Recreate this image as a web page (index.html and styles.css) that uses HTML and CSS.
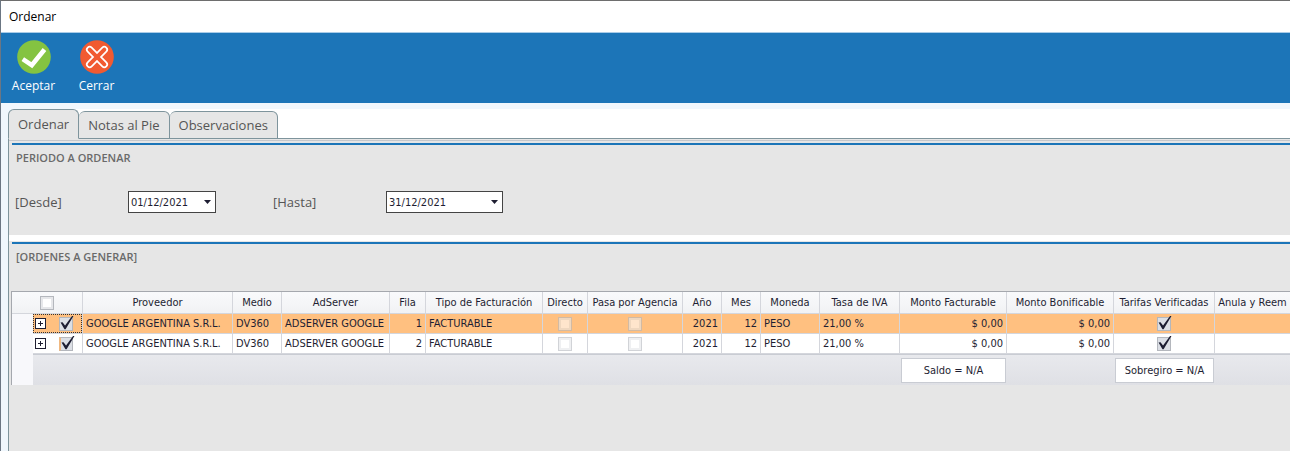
FILE: index.html
```html
<!DOCTYPE html>
<html lang="es">
<head>
    <meta charset="UTF-8">
    <meta name="viewport" content="width=device-width, initial-scale=1.0">
    <title>Ordenar</title>
    <link rel="stylesheet" href="styles.css">
</head>
<body>
    <div class="window">
        <header class="title-bar">Ordenar</header>

        <div class="toolbar">
            <button type="button" class="tool">
                <svg width="34" height="34" viewBox="0 0 34 34">
                    <circle cx="17" cy="17" r="16.8" fill="#84c341"/>
                    <path d="M5.8 19.2 L14.8 25.2 L27.5 9.5" fill="none" stroke="#fff" stroke-width="4.6"/>
                </svg>
                Aceptar
            </button>
            <button type="button" class="tool">
                <svg width="34" height="34" viewBox="0 0 34 34">
                    <circle cx="17" cy="17" r="16.8" fill="#f15a31"/>
                    <path d="M9.7 9.7 L24.3 24.3 M24.3 9.7 L9.7 24.3" fill="none" stroke="#fff" stroke-width="7.4" stroke-linecap="round"/>
                    <path d="M9.7 9.7 L24.3 24.3 M24.3 9.7 L9.7 24.3" fill="none" stroke="#f15a31" stroke-width="4" stroke-linecap="round"/>
                </svg>
                Cerrar
            </button>
        </div>

        <main class="content">
            <nav class="tabs">
                <button type="button" class="tab active">Ordenar</button>
                <button type="button" class="tab">Notas al Pie</button>
                <button type="button" class="tab">Observaciones</button>
            </nav>

            <div class="panel">
                <section class="group period">
                    <h2>PERIODO A ORDENAR</h2>
                    <form class="dates">
                        <label for="desde">[Desde]</label>
                        <div class="date-box">
                            <input type="text" id="desde" value="01/12/2021">
                            <button type="button" aria-label="Abrir calendario">
                                <svg width="7" height="4" viewBox="0 0 7 4"><path d="M0 0 H7 L3.5 4 Z" fill="#1e1e32"/></svg>
                            </button>
                        </div>
                        <label for="hasta">[Hasta]</label>
                        <div class="date-box wide">
                            <input type="text" id="hasta" value="31/12/2021">
                            <button type="button" aria-label="Abrir calendario">
                                <svg width="7" height="4" viewBox="0 0 7 4"><path d="M0 0 H7 L3.5 4 Z" fill="#1e1e32"/></svg>
                            </button>
                        </div>
                    </form>
                </section>

                <section class="group orders">
                    <h2>[ORDENES A GENERAR]</h2>
                    <div class="grid">
                        <table>
                            <colgroup>
                                <col class="c-gutter">
                                <col class="c-select">
                                <col class="c-provider">
                                <col class="c-media">
                                <col class="c-server">
                                <col class="c-row">
                                <col class="c-type">
                                <col class="c-direct">
                                <col class="c-agency">
                                <col class="c-year">
                                <col class="c-year">
                                <col class="c-currency">
                                <col class="c-tax">
                                <col class="c-amount">
                                <col class="c-amount">
                                <col class="c-rates">
                                <col>
                            </colgroup>
                            <thead>
                                <tr>
                                    <th colspan="2"><input type="checkbox" aria-label="Seleccionar todo"></th>
                                    <th>Proveedor</th>
                                    <th>Medio</th>
                                    <th>AdServer</th>
                                    <th>Fila</th>
                                    <th>Tipo de Facturación</th>
                                    <th>Directo</th>
                                    <th>Pasa por Agencia</th>
                                    <th>Año</th>
                                    <th>Mes</th>
                                    <th>Moneda</th>
                                    <th>Tasa de IVA</th>
                                    <th>Monto Facturable</th>
                                    <th>Monto Bonificable</th>
                                    <th>Tarifas Verificadas</th>
                                    <th class="last">Anula y Reem</th>
                                </tr>
                            </thead>
                            <tbody>
                                <tr class="selected">
                                    <td class="gutter"></td>
                                    <td class="select-cell">
                                        <div class="select">
                                            <button type="button" class="expand" aria-label="Expandir"></button>
                                            <input type="checkbox" aria-label="Seleccionar fila 1" checked>
                                        </div>
                                    </td>
                                    <td>GOOGLE ARGENTINA S.R.L.</td>
                                    <td>DV360</td>
                                    <td>ADSERVER GOOGLE</td>
                                    <td class="num">1</td>
                                    <td>FACTURABLE</td>
                                    <td class="check"><input type="checkbox" aria-label="Directo" disabled></td>
                                    <td class="check"><input type="checkbox" aria-label="Pasa por Agencia" disabled></td>
                                    <td class="num">2021</td>
                                    <td class="num">12</td>
                                    <td>PESO</td>
                                    <td>21,00 %</td>
                                    <td class="num">$ 0,00</td>
                                    <td class="num">$ 0,00</td>
                                    <td class="check"><input type="checkbox" aria-label="Tarifas Verificadas" checked></td>
                                    <td class="last"></td>
                                </tr>
                                <tr>
                                    <td class="gutter"></td>
                                    <td class="select-cell">
                                        <div class="select">
                                            <button type="button" class="expand" aria-label="Expandir"></button>
                                            <input type="checkbox" class="hot" aria-label="Seleccionar fila 2" checked>
                                        </div>
                                    </td>
                                    <td>GOOGLE ARGENTINA S.R.L.</td>
                                    <td>DV360</td>
                                    <td>ADSERVER GOOGLE</td>
                                    <td class="num">2</td>
                                    <td>FACTURABLE</td>
                                    <td class="check"><input type="checkbox" aria-label="Directo" disabled></td>
                                    <td class="check"><input type="checkbox" aria-label="Pasa por Agencia" disabled></td>
                                    <td class="num">2021</td>
                                    <td class="num">12</td>
                                    <td>PESO</td>
                                    <td>21,00 %</td>
                                    <td class="num">$ 0,00</td>
                                    <td class="num">$ 0,00</td>
                                    <td class="check"><input type="checkbox" aria-label="Tarifas Verificadas" checked></td>
                                    <td class="last"></td>
                                </tr>
                            </tbody>
                            <tfoot>
                                <tr>
                                    <td class="gutter"></td>
                                    <td colspan="12"></td>
                                    <td><div class="total">Saldo = N/A</div></td>
                                    <td></td>
                                    <td><div class="total">Sobregiro = N/A</div></td>
                                    <td></td>
                                </tr>
                            </tfoot>
                        </table>
                    </div>
                </section>
            </div>
        </main>
    </div>
</body>
</html>
```
FILE: styles.css
```css
* {
    box-sizing: border-box;
}

body {
    margin: 0;
    font-family: 'Open Sans', 'Noto Sans', sans-serif;
    font-size: 12px;
    color: #555;
}

button, input {
    font: inherit;
    color: inherit;
    margin: 0;
    padding: 0;
}

.window {
    display: flex;
    flex-direction: column;
    min-height: 100vh;
    border-top: 1px solid #6e6e6e;
    border-left: 1px solid #6b7683;
    background: #f0f7fd;
}

.title-bar {
    height: 32px;
    padding-left: 8px;
    line-height: 32px;
    color: #000;
    background: #fff;
    border-bottom: 1px solid #a9cce8;
}

/* Toolbar */
.toolbar {
    display: flex;
    height: 70px;
    padding-left: 1px;
    background: #1c75b8;
}

.tool {
    display: flex;
    flex-direction: column;
    align-items: center;
    gap: 4px;
    width: 63px;
    padding-top: 7px;
    line-height: 16px;
    color: #fff;
    background: none;
    border: none;
}

/* Tabs */
.content {
    flex: 1;
    display: flex;
    flex-direction: column;
    padding: 6px 0 0 7px;
}

.tabs {
    display: flex;
    align-items: flex-end;
    height: 30px;
    background: linear-gradient(to right, #f0f7fd 20px, #fff 20px);
    box-shadow: inset 0 -1px #7e949c;
}

.tab {
    height: 28px;
    padding: 0 9px;
    font-size: 13px;
    color: #555;
    background: #e6e6e6;
    border: 1px solid #7e949c;
    border-left-width: 0;
    border-radius: 6px 6px 0 0;
}

.tab.active {
    height: 30px;
    border-left-width: 1px;
    border-bottom-color: #e6e6e6;
}

.panel {
    flex: 1;
    padding-top: 4px;
    background: #e6e6e6;
    border-left: 1px solid #7e949c;
    box-shadow: inset 0 1px #e6e6e6, inset 0 2px #c4c7cc;
}

/* Groups */
.group {
    padding-left: 2px;
}

.group::before {
    content: "";
    display: block;
    height: 2px;
    margin-left: 1px;
    background: #1c75b8;
}

.group h2 {
    margin: 5px 0 0;
    padding-left: 5px;
    font-size: 11px;
    font-weight: 600;
    line-height: 16px;
    color: #6a6a6a;
}

.period {
    height: 98px;
    border-bottom: 6px solid #fff;
}

.orders {
    padding-top: 1px;
}

.dates {
    display: flex;
    align-items: center;
    margin-top: 25px;
    padding-left: 4px;
    font-size: 13px;
}

.dates label {
    width: 113px;
}

.date-box {
    display: flex;
    align-items: center;
    width: 88px;
    height: 22px;
    margin-right: 57px;
    color: #1e1e32;
    background: #fff;
    border: 1px solid #444;
    font-family: 'DejaVu Sans Condensed', 'DejaVu Sans', sans-serif;
    font-size: 11px;
}

.date-box.wide {
    width: 117px;
}

.date-box input {
    flex: 1;
    min-width: 0;
    padding-left: 2px;
    border: none;
    outline: none;
    background: none;
}

.date-box button {
    display: flex;
    justify-content: center;
    width: 16px;
    border: none;
    background: none;
}

/* Grid */
.grid {
    margin-top: 26px;
    border-left: 1px solid #a5a8ae;
    font-family: 'DejaVu Sans Condensed', 'DejaVu Sans', sans-serif;
    font-size: 11px;
    color: #1e1e32;
}

table {
    width: 100%;
    table-layout: fixed;
    border-collapse: separate;
    border-spacing: 0;
    border-top: 1px solid #a5a8ae;
}

.c-gutter { width: 21px; }
.c-select { width: 50px; }
.c-provider { width: 150px; }
.c-media { width: 49px; }
.c-server { width: 108px; }
.c-row { width: 36px; }
.c-type { width: 117px; }
.c-direct { width: 45px; }
.c-agency { width: 95px; }
.c-year { width: 39px; }
.c-currency { width: 59px; }
.c-tax { width: 80px; }
.c-amount { width: 107px; }
.c-rates { width: 101px; }

th, td {
    padding: 0 3px;
    white-space: nowrap;
    text-align: left;
    border-right: 1px solid #d4d6dc;
}

th {
    height: 22px;
    padding: 0;
    font-weight: normal;
    text-align: center;
    background: linear-gradient(#f9fafc, #f1f2f4);
    border-bottom: 1px solid #d4d6dc;
}

th.last, td.last {
    border-right: none;
}

tbody td {
    height: 20px;
    background: #fff;
    border-bottom: 1px solid #d4d6dc;
}

tbody .selected td {
    background: #ffc080;
}

tbody .gutter, tbody .selected .gutter, tfoot .gutter {
    background: #f8f8fb;
    border: none;
}

.num {
    text-align: right;
}

.check {
    text-align: center;
}

tbody .select-cell {
    padding: 0;
}

.select {
    display: flex;
    align-items: center;
    gap: 13px;
    height: 19px;
    padding-left: 1px;
    border: 1px solid transparent;
}

.selected .select {
    border: 1px dotted #333;
}

.expand {
    width: 11px;
    height: 11px;
    border: 1px solid #1e1e32;
    background:
        linear-gradient(#1e1e32, #1e1e32) center / 5px 1px no-repeat,
        linear-gradient(#1e1e32, #1e1e32) center / 1px 5px no-repeat,
        #fff;
}

input[type="checkbox"] {
    position: relative;
    appearance: none;
    width: 14px;
    height: 14px;
    vertical-align: middle;
    background: #fff;
    border: 1px solid #b4b7bd;
    box-shadow: inset 0 0 0 2px #e6e7ea;
}

input[type="checkbox"]:checked {
    background: #dcdfe5;
    box-shadow: none;
}

input[type="checkbox"]:disabled {
    opacity: 0.6;
}

input[type="checkbox"].hot {
    border-left: 2px solid #f0b880;
}

/* tick drawn over the box, it sticks out at the top */
input[type="checkbox"]:checked::after {
    content: "";
    position: absolute;
    top: -2px;
    left: 0;
    width: 14px;
    height: 14px;
    background: #1e1e32;
    clip-path: polygon(4% 50%, 18% 48%, 36% 72%, 86% 4%, 96% 4%, 40% 98%, 32% 98%);
}

tfoot td {
    height: 31px;
    padding: 0 1px;
    vertical-align: middle;
    background: linear-gradient(#e8e9ed, #dfe0e5);
    border-right: none;
    border-top: 1px solid #c9ccd3;
}

.total {
    height: 25px;
    line-height: 23px;
    text-align: center;
    background: #fff;
    border: 1px solid #c9ccd3;
}
```
